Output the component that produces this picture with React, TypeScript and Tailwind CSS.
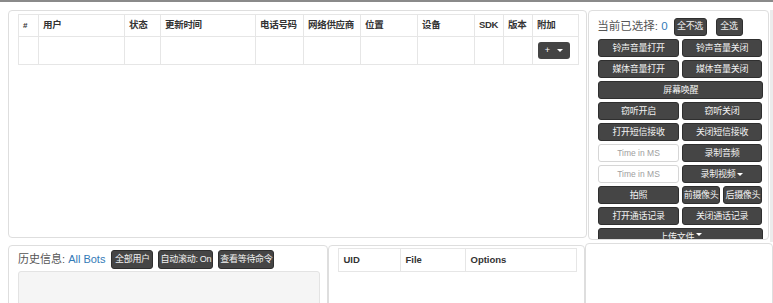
import React from "react";

const font = { fontFamily: '"Liberation Sans", "Noto Sans CJK SC", sans-serif' };

function Btn({ children, className = "" }: { children: React.ReactNode; className?: string }) {
  return (
    <div
      className={`flex items-center justify-center overflow-hidden whitespace-nowrap rounded-[3px] border border-[#2f2f2f] bg-[#454545] text-[9px] leading-none tracking-[-0.3px] text-[#f2f2f2] ${className}`}
    >
      {children}
    </div>
  );
}

function TimeInput() {
  return (
    <div className="flex h-[18px] w-[81px] items-center justify-center whitespace-nowrap rounded-[3px] border border-[#d6d6d6] bg-white text-[8.5px] text-[#a0a0a0]">
      Time in MS
    </div>
  );
}

const Caret = () => (
  <span className="ml-[2px] inline-block h-0 w-0 border-x-[3px] border-t-[3px] border-x-transparent border-t-white" />
);

const cols: [string, number][] = [
  ["#", 20],
  ["用户", 86],
  ["状态", 36],
  ["更新时间", 95],
  ["电话号码", 48],
  ["网络供应商", 57],
  ["位置", 57],
  ["设备", 57],
  ["SDK", 29],
  ["版本", 29],
  ["附加", 46],
];

export default function App() {
  return (
    <div className="relative h-[303px] w-[773px] overflow-hidden bg-white text-[#333]" style={font}>
      <div className="h-[2px] w-full bg-[#8a8a8a]" />
      <div className="flex items-start gap-[1px] pl-[8px] pt-[8px]">
        {/* main panel */}
        <div className="h-[228px] w-[580px] rounded-[4px] border border-[#dedede] pl-[9px] pt-[3px]">
          <table className="border-collapse text-[9.5px]" style={{ width: 560, tableLayout: "fixed" }}>
            <colgroup>
              {cols.map(([n, w]) => (
                <col key={n} style={{ width: w }} />
              ))}
            </colgroup>
            <thead>
              <tr className="h-[22px]">
                {cols.map(([n]) => (
                  <th
                    key={n}
                    className={`whitespace-nowrap border border-[#e6e6e6] px-[4px] text-left font-bold tracking-[-0.3px] text-[#333] ${n === "#" ? "text-[8px]" : ""}`}
                  >
                    {n}
                  </th>
                ))}
              </tr>
            </thead>
            <tbody>
              <tr className="h-[28px]">
                {cols.map(([n]) => (
                  <td key={n} className="border border-[#e6e6e6] px-[5px]">
                    {n === "附加" ? (
                      <div className="flex h-[17px] w-[32px] items-center justify-center gap-[7px] rounded-[3px] bg-[#444] text-[9px] text-white">
                        <span>+</span>
                        <span className="inline-block h-0 w-0 border-x-[3px] border-t-[3px] border-x-transparent border-t-white" />
                      </div>
                    ) : null}
                  </td>
                ))}
              </tr>
            </tbody>
          </table>
        </div>
        {/* right panel */}
        <div className="h-[230px] w-[181px] overflow-hidden rounded-[4px] border border-[#dedede] pl-[8px] pt-[6px]">
          <div className="flex h-[19px] items-center">
            <span className="whitespace-nowrap text-[11.5px] text-[#555]">
              当前已选择: <span className="text-[#337ab7]">0</span>
            </span>
            <Btn className="ml-[6px] h-[18px] w-[33px]">全不选</Btn>
            <Btn className="ml-[9px] h-[18px] w-[27px]">全选</Btn>
          </div>
          <div className="mt-[3px] flex w-[165px] flex-col gap-[3px] pl-[1px]">
            <div className="flex gap-[3px]">
              <Btn className="h-[18px] w-[81px]">铃声音量打开</Btn>
              <Btn className="h-[18px] w-[81px]">铃声音量关闭</Btn>
            </div>
            <div className="flex gap-[3px]">
              <Btn className="h-[18px] w-[81px]">媒体音量打开</Btn>
              <Btn className="h-[18px] w-[81px]">媒体音量关闭</Btn>
            </div>
            <Btn className="h-[18px] w-[165px]">屏幕唤醒</Btn>
            <div className="flex gap-[3px]">
              <Btn className="h-[18px] w-[81px]">窃听开启</Btn>
              <Btn className="h-[18px] w-[81px]">窃听关闭</Btn>
            </div>
            <div className="flex gap-[3px]">
              <Btn className="h-[18px] w-[81px]">打开短信接收</Btn>
              <Btn className="h-[18px] w-[81px]">关闭短信接收</Btn>
            </div>
            <div className="flex gap-[3px]">
              <TimeInput />
              <Btn className="h-[18px] w-[81px]">录制音频</Btn>
            </div>
            <div className="flex gap-[3px]">
              <TimeInput />
              <Btn className="h-[18px] w-[81px]">
                录制视频
                <Caret />
              </Btn>
            </div>
            <div className="flex gap-[3px]">
              <Btn className="h-[18px] w-[81px]">拍照</Btn>
              <Btn className="h-[18px] w-[39px] text-[8.5px]">前摄像头</Btn>
              <Btn className="h-[18px] w-[39px] text-[8.5px]">后摄像头</Btn>
            </div>
            <div className="flex gap-[3px]">
              <Btn className="h-[18px] w-[81px]">打开通话记录</Btn>
              <Btn className="h-[18px] w-[81px]">关闭通话记录</Btn>
            </div>
            <Btn className="h-[18px] w-[165px] items-start pt-[4px]">
              上传文件
              <Caret />
            </Btn>
          </div>
        </div>
        <div className="h-[232px] w-[3px] bg-[#ececec]" />
      </div>
      {/* bottom row */}
      <div className="mt-[3px] flex items-start pl-[8px]">
        <div className="h-[80px] w-[322px] rounded-[4px] border border-[#dedede] pl-[9px] pt-[3px]">
          <div className="flex h-[20px] items-center">
            <span className="whitespace-nowrap text-[11px] text-[#555]">
              历史信息: <span className="text-[#337ab7]">All Bots</span>
            </span>
            <Btn className="ml-[6px] h-[19px] w-[42px]">全部用户</Btn>
            <Btn className="ml-[5px] h-[19px] w-[55px]">自动滚动: On</Btn>
            <Btn className="ml-[5px] h-[19px] w-[56px]">查看等待命令</Btn>
          </div>
          <div className="mt-[2px] h-[60px] w-[302px] rounded-[3px] border border-[#e3e3e3] bg-[#f5f5f5]" />
        </div>
        <div className="h-[80px] w-[259px] rounded-[4px] border border-[#dedede] pl-[9px] pt-[2px]">
          <table className="border-collapse text-[9.5px]" style={{ width: 238, tableLayout: "fixed" }}>
            <colgroup>
              <col style={{ width: 62 }} />
              <col style={{ width: 65 }} />
              <col style={{ width: 111 }} />
            </colgroup>
            <thead>
              <tr className="h-[23px]">
                <th className="border border-[#e6e6e6] px-[5px] text-left font-bold">UID</th>
                <th className="border border-[#e6e6e6] px-[5px] text-left font-bold">File</th>
                <th className="border border-[#e6e6e6] px-[5px] text-left font-bold">Options</th>
              </tr>
            </thead>
          </table>
        </div>
        <div className="-mt-[2px] h-[80px] w-[190px] rounded-[4px] border border-[#dedede]" />
      </div>
    </div>
  );
}
